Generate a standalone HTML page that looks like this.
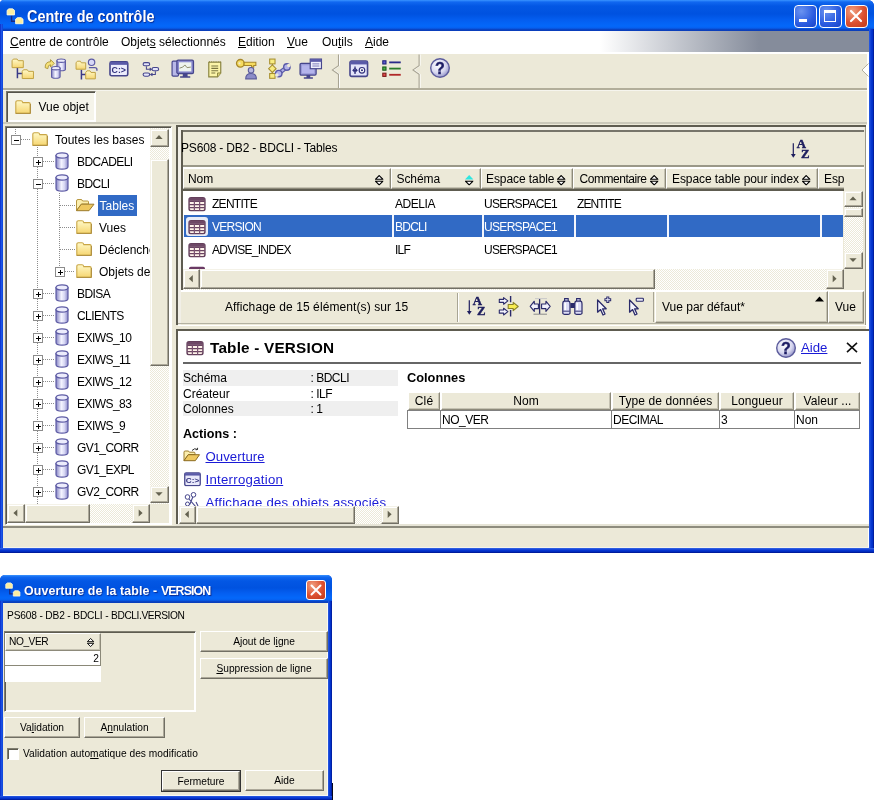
<!DOCTYPE html>
<html><head><meta charset="utf-8"><title>Centre de contrôle</title>
<style>
*{box-sizing:border-box;margin:0;padding:0}
html,body{width:875px;height:801px;background:#fff;overflow:hidden}
body{font:12px "Liberation Sans",sans-serif;color:#000;position:relative;will-change:transform}
.a{position:absolute}
.t{position:absolute;white-space:pre;line-height:14px;height:14px}
.d{font-size:10.2px}
u{text-decoration:underline;text-underline-offset:1px}
.beige{background:#ece9d8}
.sunk{border:1px solid;border-color:#848274 #fff #fff #848274;box-shadow:inset 1px 1px 0 #55534a}
.btn{position:absolute;background:#ece9d8;border:1px solid;border-color:#fff #716f64 #716f64 #fff;box-shadow:inset -1px -1px 0 #aca899;text-align:center;white-space:pre;font-size:10.2px}
.sb{position:absolute;background:#ece9d8;border:1px solid;border-color:#f4f2e8 #716f64 #716f64 #f4f2e8;box-shadow:inset -1px -1px 0 #aca899, inset 1px 1px 0 #fff}
.track{position:absolute;background:#f5f4ec conic-gradient(#fff 25%,#ece9d8 0 50%,#fff 0 75%,#ece9d8 0) 0 0/2px 2px}
.hc{position:absolute;background:#ece9d8;letter-spacing:-0.08px;border:1px solid;border-color:#fff #8d8a7a #8d8a7a #fff;box-shadow:inset -1px -1px 0 #c5c2b2;white-space:pre;line-height:21px;padding-left:5px;height:21px;top:168px;overflow:hidden}
.sel{background:#316ac5;color:#fff}
.lnk{color:#1a1ad6;text-decoration:underline;font-size:13.2px}
.vdot{position:absolute;width:1px;background:repeating-linear-gradient(#8c8c8c 0 1px,transparent 1px 2px)}
.hdot{position:absolute;height:1px;background:repeating-linear-gradient(90deg,#8c8c8c 0 1px,transparent 1px 2px)}
.pm{position:absolute;width:10px;height:10px;background:#fff;border:1px solid #8c8c8c}
.pm i{position:absolute;left:2px;top:3.5px;width:5px;height:1.3px;background:#000}
.pm b{position:absolute;left:3.8px;top:1.6px;width:1.3px;height:5px;background:#000}
svg{position:absolute;overflow:visible}
</style></head><body>

<svg width="0" height="0" style="left:-10px;top:-10px"><defs>
<linearGradient id="gF" x1="0" y1="0" x2="0" y2="1"><stop offset="0" stop-color="#fff9c8"/><stop offset="1" stop-color="#f6d672"/></linearGradient>
<linearGradient id="gC" x1="0" y1="0" x2="1" y2="0"><stop offset="0" stop-color="#8583c4"/><stop offset=".45" stop-color="#f4f4ff"/><stop offset=".7" stop-color="#d8d8f4"/><stop offset="1" stop-color="#8a88c8"/></linearGradient>
<radialGradient id="gH" cx=".4" cy=".35" r=".7"><stop offset="0" stop-color="#fff"/><stop offset=".6" stop-color="#d8d8f0"/><stop offset="1" stop-color="#8c8cc4"/></radialGradient>
<linearGradient id="gW" x1="0" y1="0" x2="0" y2="1"><stop offset="0" stop-color="#e4e4fa"/><stop offset="1" stop-color="#9c9cd8"/></linearGradient>
<symbol id="folder" viewBox="0 0 16 14"><path d="M.8 13.2V2.4Q.8 .8 2.4 .8H6Q7.3 .8 7.8 2.6H13.8Q15.2 2.6 15.2 4V13.2Z" fill="url(#gF)" stroke="#c9a646" stroke-width="1.1"/><path d="M.8 13.4H15.4V4" fill="none" stroke="#a8883a" stroke-width=".9"/></symbol>
<symbol id="fopen" viewBox="0 0 20 14"><path d="M1.5 12.5V3Q1.5 1.5 3 1.5H6Q7.2 1.5 7.6 3H12.5Q13.5 3 13.5 4V6H6.5L1.5 12.5Z" fill="#fbeeae" stroke="#b89840" stroke-width="1"/><path d="M1.5 12.7L6.3 6.2H19L14 12.7Z" fill="#eec860" stroke="#9c7c2c" stroke-width="1"/></symbol>
<symbol id="cyl" viewBox="0 0 14 18"><path d="M1 3.5V14.5Q1 17.2 7 17.2Q13 17.2 13 14.5V3.5Z" fill="url(#gC)" stroke="#5d5ba4" stroke-width="1.2"/><ellipse cx="7" cy="3.5" rx="6" ry="2.6" fill="#ececfc" stroke="#5d5ba4" stroke-width="1.2"/></symbol>
<symbol id="tbl" viewBox="0 0 18 15"><rect x=".8" y=".8" width="16.4" height="13.4" rx="2" fill="#fff3ea" stroke="#64405c" stroke-width="1.5"/><rect x="1" y="1" width="16" height="3" fill="#6e4866"/><path d="M1 4.6H17M1 7.8H17M1 11H17" stroke="#6a4462" stroke-width="1.35" fill="none"/><path d="M6.3 4.5V14M11.7 4.5V14" stroke="#7a5472" stroke-width="1.3" fill="none"/></symbol>
<symbol id="srt" viewBox="0 0 8 10"><path d="M4 .5L7.6 4.1H.4Z" fill="#fff" stroke="#000" stroke-width="1.05" stroke-linejoin="miter"/><path d="M4 9.5L7.6 5.9H.4Z" fill="#fff" stroke="#000" stroke-width="1.05"/></symbol>
<symbol id="srtc" viewBox="0 0 8 10"><path d="M4 0L8 4.4H0Z" fill="#2ee6e0"/><path d="M4 9.5L7.6 5.9H.4Z" fill="#fff" stroke="#000" stroke-width="1.05"/></symbol>
<symbol id="help" viewBox="0 0 20 20"><circle cx="10" cy="10" r="9.3" fill="url(#gH)" stroke="#5c5c9c" stroke-width="1.4"/><text x="10" y="15.6" text-anchor="middle" font-family="Liberation Sans,sans-serif" font-weight="bold" font-size="16" fill="#1c1c64" stroke="#1c1c64" stroke-width=".4">?</text></symbol>
<symbol id="term" viewBox="0 0 18 15"><rect x=".8" y=".8" width="16.4" height="13.4" rx="1.5" fill="#e8e8fa" stroke="#46468c" stroke-width="1.4"/><rect x="1" y="1" width="16" height="2.6" fill="#5a5aa8"/><text x="9" y="12" text-anchor="middle" font-family="Liberation Sans,sans-serif" font-weight="bold" font-size="8.6" fill="#30307c">C:&gt;</text></symbol>
<symbol id="az" viewBox="0 0 20 20"><path d="M3.3 4.3V17" stroke="#1e1e5e" stroke-width="1.2" fill="none"/><path d="M.9 15L3.3 18.8L5.7 15Z" fill="#1e1e5e"/><text x="6.8" y="9.4" font-family="Liberation Serif,serif" font-weight="bold" font-size="12.8" fill="#1e1e5e" stroke="#1e1e5e" stroke-width=".45">A</text><text x="11" y="19" font-family="Liberation Serif,serif" font-weight="bold" font-size="12.8" fill="#1e1e5e" stroke="#1e1e5e" stroke-width=".45">Z</text></symbol>
</defs></svg>
<!-- main window frame -->
<div class="a" style="left:0px;top:0px;width:874px;height:553px;background:#0b3bd6;border-radius:4px 6px 0 0"></div>
<div class="a" style="left:0px;top:0px;width:874px;height:31px;border-radius:4px 6px 0 0;background:linear-gradient(#3a94ff 0,#1168f0 2px,#0357e4 6px,#0052e0 14px,#045ef0 20px,#0468fa 26px,#0660f0 28px,#0a44c4 29.5px,#0a3cb8 31px)"></div>
<div class="a" style="left:0px;top:24px;width:3px;height:529px;background:linear-gradient(90deg,#0a2bc8,#1c56e6 50%,#0d41d8)"></div>
<div class="a" style="left:869px;top:29px;width:5px;height:524px;background:linear-gradient(90deg,#2a5ce2,#0838d2 45%,#0030c8 70%,#00138c)"></div>
<div class="a" style="left:0px;top:548px;width:874px;height:5px;background:linear-gradient(#3a6ae6,#0a38d4 40%,#0030c8 65%,#00138c)"></div>
<div class="a beige" style="left:3px;top:31px;width:866px;height:517px;"></div>
<svg style="left:6px;top:7.6px" width="19.6" height="17" viewBox="0 0 18 16"><path d="M5 7V12.5H9" stroke="#1a2a80" stroke-width="1.3" fill="none"/><path d="M.8 6.5V2.2L2.5 .8H6L7.8 2.2V6.5Z" fill="#fbeea0" stroke="#fffbe0" stroke-width=".8"/><path d="M8.8 14.8V10.5L10.5 9.1H14L15.8 10.5V14.8Z" fill="#fbeea0" stroke="#fffbe0" stroke-width=".8"/></svg>
<div class="t " style="left:27px;top:8.4px;font:bold 15.6px 'Liberation Sans',sans-serif;color:#fff;line-height:18px;height:18px;text-shadow:1px 1px 1px #0a2a90;transform:scaleX(.925);transform-origin:0 0">Centre de contrôle</div>
<div class="a" style="left:793.5px;top:4.5px;width:23px;height:23px;background:radial-gradient(circle at 30% 25%,#6a93f0,#2a5be0 60%,#1a45c8);border:1.4px solid #fff;border-radius:4px"></div>
<div class="a" style="left:819px;top:4.5px;width:23px;height:23px;background:radial-gradient(circle at 30% 25%,#6a93f0,#2a5be0 60%,#1a45c8);border:1.4px solid #fff;border-radius:4px"></div>
<div class="a" style="left:844.5px;top:4.5px;width:23px;height:23px;background:radial-gradient(circle at 30% 25%,#f0a080,#dc5030 55%,#c03a18);border:1.4px solid #fff;border-radius:4px"></div>
<div class="a" style="left:799px;top:19px;width:8px;height:3px;background:#fff"></div>
<div class="a" style="left:824px;top:10px;width:12px;height:12px;border:1px solid #fff;border-top:3px solid #fff"></div>
<svg style="left:845px;top:5px" width="22" height="22"><path d="M6 6L16 16M16 6L6 16" stroke="#fff" stroke-width="2.2" stroke-linecap="round"/></svg>
<div class="a" style="left:3px;top:31px;width:866px;height:21px;background:linear-gradient(90deg,#fff 0,#fff 597px,#858c9b 756px,#858c9b)"></div>
<div class="a" style="left:3px;top:52px;width:866px;height:2px;background:#fff"></div>
<div class="t " style="left:10px;top:34.5px;"><u>C</u>entre de contrôle</div>
<div class="t " style="left:121px;top:34.5px;">Objet<u>s</u> sélectionnés</div>
<div class="t " style="left:238px;top:34.5px;"><u>E</u>dition</div>
<div class="t " style="left:287px;top:34.5px;"><u>V</u>ue</div>
<div class="t " style="left:322px;top:34.5px;">Ou<u>t</u>ils</div>
<div class="t " style="left:365px;top:34.5px;"><u>A</u>ide</div>
<div class="a" style="left:3px;top:88px;width:864px;height:1.6px;background:#b2ae9a"></div>
<div class="a" style="left:3px;top:89.6px;width:864px;height:1px;background:#f6f5ee"></div>
<div class="a" style="left:867px;top:54px;width:2px;height:71px;background:#fff"></div>
<div class="a" style="left:866px;top:125px;width:3px;height:401px;background:#fff"></div>
<div class="a" style="left:868px;top:526px;width:1px;height:22px;background:#fff"></div>
<svg style="left:11.229999999999999px;top:57.599999999999994px" width="23.540000000000003" height="21.400000000000002" viewBox="0 0 22 20"><path d="M6 9V19M6 14.5H11" stroke="#3a3a88" stroke-width="1.4" fill="none"/><path d="M1 9V2.5L2.2 1H5.7250000000000005L6.775 2.5H11.5V9Z" fill="url(#gF)" stroke="#c0a040" stroke-width=".9"/><path d="M10.5 19.2V12.5L11.7 11H15.225000000000001L16.275 12.5H21.0V19.2Z" fill="url(#gF)" stroke="#c0a040" stroke-width=".9"/></svg>
<svg style="left:43.23px;top:57.599999999999994px" width="23.540000000000003" height="21.400000000000002" viewBox="0 0 22 20"><path d="M2 9Q2 3.5 7 3.5V1.5L10.5 5L7 8.5V6.3Q4.5 6.3 4.5 10Z" fill="#f6e27a" stroke="#a89030" stroke-width=".8"/><path d="M13 2.5V10.5Q13 12 17.0 12Q21 12 21 10.5V2.5Z" fill="url(#gC)" stroke="#5d5ba4" stroke-width="1"/><ellipse cx="17.0" cy="2.5" rx="4.0" ry="1.6" fill="#ececfc" stroke="#5d5ba4" stroke-width="1"/><path d="M8 9.5V17.5Q8 19 12.0 19Q16 19 16 17.5V9.5Z" fill="url(#gC)" stroke="#5d5ba4" stroke-width="1"/><ellipse cx="12.0" cy="9.5" rx="4.0" ry="1.6" fill="#ececfc" stroke="#5d5ba4" stroke-width="1"/></svg>
<svg style="left:75.23px;top:57.599999999999994px" width="23.540000000000003" height="21.400000000000002" viewBox="0 0 22 20"><path d="M6 11V20M6 15.5H10" stroke="#3a3a88" stroke-width="1.4" fill="none"/><path d="M1 10.5V4.5L2.2 3H5.05L5.95 4.5H10V10.5Z" fill="url(#gF)" stroke="#c0a040" stroke-width=".9"/><path d="M10 19.5V13.5L11.2 12H14.05L14.95 13.5H19V19.5Z" fill="url(#gF)" stroke="#c0a040" stroke-width=".9"/><circle cx="15.5" cy="4" r="3" fill="#d8d8f6" stroke="#5d5ba4" stroke-width="1.1"/><path d="M13 9H18.5Q20.5 9 20.5 11V12" stroke="#5d5ba4" stroke-width="1.3" fill="none"/></svg>
<svg style="left:107.23px;top:57.599999999999994px" width="23.540000000000003" height="21.400000000000002" viewBox="0 0 22 20"><rect x="2.8" y="3.6" width="16.6" height="13" rx="1.5" fill="#ececfc" stroke="#46468c" stroke-width="1.5"/><rect x="3" y="3.8" width="16.2" height="2.6" fill="#5a5aa8"/><text x="11" y="14.3" text-anchor="middle" font-family="Liberation Sans,sans-serif" font-weight="bold" font-size="8.2" fill="#30307c">C:&gt;</text></svg>
<svg style="left:139.23px;top:57.599999999999994px" width="23.540000000000003" height="21.400000000000002" viewBox="0 0 22 20"><g transform="translate(1.2 2.2) scale(.88 .84)"><rect x="3" y="2.5" width="7" height="3.6" rx="1.8" fill="#e4e4fa" stroke="#46468c" stroke-width="1.2"/><rect x="12.5" y="8" width="7" height="3.6" rx="1.8" fill="#e4e4fa" stroke="#46468c" stroke-width="1.2"/><rect x="3" y="14" width="7" height="3.6" rx="1.8" fill="#e4e4fa" stroke="#46468c" stroke-width="1.2"/><path d="M6.5 6.5V9.8H11.5M10 8.3L11.8 9.8L10 11.3M16 12V15.8H11.5M13 14.3L11 15.8L13 17.3" stroke="#46468c" stroke-width="1.1" fill="none"/></g></svg>
<svg style="left:171.23px;top:57.599999999999994px" width="23.540000000000003" height="21.400000000000002" viewBox="0 0 22 20"><rect x="1" y="3" width="6" height="14" rx="1" fill="#b8b8e8" stroke="#46468c" stroke-width="1.1"/><rect x="5.5" y="2" width="15.5" height="12.5" rx="1.2" fill="#8c8cd0" stroke="#46468c" stroke-width="1.2"/><rect x="7.5" y="4" width="11.5" height="8.5" fill="#eef4ee"/><path d="M8 9.5L11 8.5L13 6.5L15 9L18.5 8.5" stroke="#8a8a6a" stroke-width=".9" fill="none"/><path d="M11 14.5V17H8.5V18.5H18V17H15.5V14.5Z" fill="#46468c"/></svg>
<svg style="left:203.23px;top:57.599999999999994px" width="23.540000000000003" height="21.400000000000002" viewBox="0 0 22 20"><path d="M5.4 4H16.6V14L13.6 17.6H5.4Z" fill="#fbf4a8" stroke="#8a8440" stroke-width="1.1"/><path d="M6.2 4V2.9M8.2 4V2.9M10.2 4V2.9M12.2 4V2.9M14.2 4V2.9M16 4V2.9" stroke="#8a8440" stroke-width=".9"/><path d="M7.8 7.5H14.2M7.8 9.7H14.2M7.8 11.9H14.2M7.8 14H11.5" stroke="#7a7440" stroke-width="1"/><path d="M13.6 17.6V14H16.6" fill="#e0d478" stroke="#8a8440" stroke-width=".9"/></svg>
<svg style="left:235.23px;top:57.599999999999994px" width="23.540000000000003" height="21.400000000000002" viewBox="0 0 22 20"><circle cx="5" cy="5" r="3.6" fill="#f6dc60" stroke="#a8882a" stroke-width="1.2"/><circle cx="4.2" cy="5" r="1" fill="#ece9d8"/><path d="M8.5 4H19.5V7H17.5V8.5H15.5V7H8.5Z" fill="#f6dc60" stroke="#a8882a" stroke-width="1"/><circle cx="15" cy="11.5" r="2.6" fill="#b8b8e0" stroke="#5a5a9a" stroke-width="1"/><path d="M10 19.5Q10 14.5 15 14.5Q20 14.5 20 19.5Z" fill="#8c8cc8" stroke="#5a5a9a" stroke-width="1"/></svg>
<svg style="left:267.23px;top:57.599999999999994px" width="23.540000000000003" height="21.400000000000002" viewBox="0 0 22 20"><path d="M5 4.5V16" stroke="#8a7a30" stroke-width="1"/><rect x="2.5" y="1" width="5" height="4.5" fill="#f8ec80" stroke="#a89030" stroke-width="1"/><path d="M5 6.5L8.5 10L5 13.5L1.5 10Z" fill="#f8ec80" stroke="#a89030" stroke-width="1"/><rect x="2.5" y="14.5" width="5" height="4.5" fill="#f8ec80" stroke="#a89030" stroke-width="1"/><path d="M11.5 14L18 9" stroke="#5a5aa8" stroke-width="4" stroke-linecap="round"/><path d="M11.5 14L18 9" stroke="#b4b4e8" stroke-width="1.8" stroke-linecap="round"/><circle cx="18.6" cy="8.4" r="3" fill="#b4b4e8" stroke="#5a5aa8" stroke-width="1.3"/><circle cx="20.4" cy="7" r="1.7" fill="#ece9d8"/><circle cx="11" cy="14.6" r="3" fill="#b4b4e8" stroke="#5a5aa8" stroke-width="1.3"/><circle cx="9.2" cy="16" r="1.7" fill="#ece9d8"/></svg>
<svg style="left:299.23px;top:57.599999999999994px" width="23.540000000000003" height="21.400000000000002" viewBox="0 0 22 20"><rect x="1" y="5" width="15" height="11" rx="1.2" fill="#9a9ad8" stroke="#46468c" stroke-width="1.2"/><rect x="2.8" y="6.8" width="11.4" height="7.4" fill="#b4b4ec"/><path d="M7 16V18H4.5V19.5H13V18H10.5V16Z" fill="#46468c"/><rect x="10.5" y="1" width="10.5" height="9" fill="#eeeefc" stroke="#46468c" stroke-width="1.1"/><rect x="10.5" y="1" width="10.5" height="2.6" fill="#5a5aa8"/><path d="M12.5 5.5H19M12.5 7.5H19" stroke="#7a7ab8" stroke-width=".9"/></svg>
<svg style="left:0;top:0" width="1" height="1"><path d="M338.5 54.5V65.6L332.4 69.9L338.5 74.2V88" fill="none" stroke="#fff" stroke-width="1" transform="translate(1 0)"/><path d="M338.5 54.5V65.6L332.4 69.9L338.5 74.2V88" fill="none" stroke="#a8a493" stroke-width="1.1"/></svg>
<svg style="left:347.23px;top:57.599999999999994px" width="23.540000000000003" height="21.400000000000002" viewBox="0 0 22 20"><rect x="2.8" y="2.8" width="16.4" height="14.4" rx="1.5" fill="#e4e4fa" stroke="#46468c" stroke-width="1.5"/><rect x="3" y="3" width="16" height="3" fill="#5a5aa8"/><path d="M7.5 8V15M5.2 11.5H9.8" stroke="#30307c" stroke-width="1.2"/><circle cx="7.5" cy="11.5" r="1.6" fill="none" stroke="#30307c" stroke-width=".9"/><circle cx="14" cy="11.5" r="2.6" fill="#fff" stroke="#30307c" stroke-width="1.1"/><circle cx="14" cy="11.5" r="1" fill="#30307c"/></svg>
<svg style="left:379.73px;top:57.599999999999994px" width="23.540000000000003" height="21.400000000000002" viewBox="0 0 22 20"><rect x="2.6" y="2.6" width="3" height="3" fill="#5a5ad0" stroke="#22227a" stroke-width="1"/><rect x="2.6" y="8.4" width="3" height="3" fill="#4ab04a" stroke="#1a5a1a" stroke-width="1"/><rect x="2.6" y="14.2" width="3" height="3" fill="#e04a4a" stroke="#7a1a1a" stroke-width="1"/><path d="M8.6 4.1H19.4" stroke="#2a2a8a" stroke-width="1.7"/><path d="M8.6 9.9H19.4" stroke="#2a7a2a" stroke-width="1.7"/><path d="M8.6 15.7H19.4" stroke="#b02828" stroke-width="1.7"/></svg>
<svg style="left:0;top:0" width="1" height="1"><path d="M419.1 54.5V65.6L413.0 69.9L419.1 74.2V88" fill="none" stroke="#fff" stroke-width="1" transform="translate(1 0)"/><path d="M419.1 54.5V65.6L413.0 69.9L419.1 74.2V88" fill="none" stroke="#a8a493" stroke-width="1.1"/></svg>
<svg style="left:430px;top:58px" width="20" height="20"><use href="#help" width="20" height="20"/></svg>
<svg style="left:861px;top:63px" width="8" height="14"><path d="M7.5 .5L1 7L7.5 13.5" fill="#fff" stroke="#b4b09d" stroke-width="1"/></svg>
<div class="a" style="left:6px;top:91px;width:90px;height:32px;background:#f5f4ea;border:1px solid;border-color:#7b796c #fff #fff #7b796c;box-shadow:inset 1px 1px 0 #55534a,inset -1px -2px 0 #fff"></div>
<svg style="left:15px;top:100px" width="16" height="14"><use href="#folder" width="16" height="14"/></svg>
<div class="t " style="left:38.5px;top:100px;">Vue objet</div>
<div class="a" style="left:3px;top:122px;width:864px;height:2px;background:#cbc9ba"></div>
<div class="a sunk" style="left:5px;top:126px;width:167px;height:399px;background:#fff"></div>
<div class="a" style="left:7px;top:128px;width:143px;height:376px;overflow:hidden">
<div class="vdot" style="left:8px;top:-1px;width:1px;height:8px;"></div>
<div class="vdot" style="left:30px;top:19px;width:1px;height:360px;"></div>
<div class="vdot" style="left:52px;top:65px;width:1px;height:79px;"></div>
<div class="hdot" style="left:14px;top:11px;width:10px;height:1px;"></div>
<div class="pm" style="left:4px;top:7px"><i></i></div>
<svg style="left:25px;top:4px" width="16" height="14"><use href="#folder" width="16" height="14"/></svg>
<div class="t " style="left:48px;top:5px;">Toutes les bases</div>
<div class="hdot" style="left:36px;top:33px;width:11px;height:1px;"></div>
<div class="pm" style="left:26px;top:29px"><i></i><b></b></div>
<svg style="left:48px;top:24px" width="14" height="18"><use href="#cyl" width="14" height="18"/></svg>
<div class="t " style="left:70px;top:27px;letter-spacing:-0.55px">BDCADELI</div>
<div class="hdot" style="left:36px;top:55px;width:11px;height:1px;"></div>
<div class="pm" style="left:26px;top:51px"><i></i></div>
<svg style="left:48px;top:46px" width="14" height="18"><use href="#cyl" width="14" height="18"/></svg>
<div class="t " style="left:70px;top:49px;letter-spacing:-0.55px">BDCLI</div>
<div class="hdot" style="left:53px;top:77px;width:15px;height:1px;"></div>
<svg style="left:68px;top:70px" width="20" height="14"><use href="#fopen" width="20" height="14"/></svg>
<div class="a sel" style="left:91.4px;top:66.69999999999999px;width:38.6px;height:21.6px;"></div>
<div class="t " style="left:92.6px;top:71px;color:#fff">Tables</div>
<div class="hdot" style="left:53px;top:99px;width:15px;height:1px;"></div>
<svg style="left:69px;top:92px" width="16" height="14"><use href="#folder" width="16" height="14"/></svg>
<div class="t " style="left:92px;top:93px;">Vues</div>
<div class="hdot" style="left:53px;top:121px;width:15px;height:1px;"></div>
<svg style="left:69px;top:114px" width="16" height="14"><use href="#folder" width="16" height="14"/></svg>
<div class="t " style="left:92px;top:115px;">Déclencheurs</div>
<div class="hdot" style="left:58px;top:143px;width:10px;height:1px;"></div>
<div class="pm" style="left:48px;top:139px"><i></i><b></b></div>
<svg style="left:69px;top:136px" width="16" height="14"><use href="#folder" width="16" height="14"/></svg>
<div class="t " style="left:92px;top:137px;">Objets de</div>
<div class="hdot" style="left:36px;top:165px;width:11px;height:1px;"></div>
<div class="pm" style="left:26px;top:161px"><i></i><b></b></div>
<svg style="left:48px;top:156px" width="14" height="18"><use href="#cyl" width="14" height="18"/></svg>
<div class="t " style="left:70px;top:159px;letter-spacing:-0.55px">BDISA</div>
<div class="hdot" style="left:36px;top:187px;width:11px;height:1px;"></div>
<div class="pm" style="left:26px;top:183px"><i></i><b></b></div>
<svg style="left:48px;top:178px" width="14" height="18"><use href="#cyl" width="14" height="18"/></svg>
<div class="t " style="left:70px;top:181px;letter-spacing:-0.55px">CLIENTS</div>
<div class="hdot" style="left:36px;top:209px;width:11px;height:1px;"></div>
<div class="pm" style="left:26px;top:205px"><i></i><b></b></div>
<svg style="left:48px;top:200px" width="14" height="18"><use href="#cyl" width="14" height="18"/></svg>
<div class="t " style="left:70px;top:203px;letter-spacing:-0.55px">EXIWS_10</div>
<div class="hdot" style="left:36px;top:231px;width:11px;height:1px;"></div>
<div class="pm" style="left:26px;top:227px"><i></i><b></b></div>
<svg style="left:48px;top:222px" width="14" height="18"><use href="#cyl" width="14" height="18"/></svg>
<div class="t " style="left:70px;top:225px;letter-spacing:-0.55px">EXIWS_11</div>
<div class="hdot" style="left:36px;top:253px;width:11px;height:1px;"></div>
<div class="pm" style="left:26px;top:249px"><i></i><b></b></div>
<svg style="left:48px;top:244px" width="14" height="18"><use href="#cyl" width="14" height="18"/></svg>
<div class="t " style="left:70px;top:247px;letter-spacing:-0.55px">EXIWS_12</div>
<div class="hdot" style="left:36px;top:275px;width:11px;height:1px;"></div>
<div class="pm" style="left:26px;top:271px"><i></i><b></b></div>
<svg style="left:48px;top:266px" width="14" height="18"><use href="#cyl" width="14" height="18"/></svg>
<div class="t " style="left:70px;top:269px;letter-spacing:-0.55px">EXIWS_83</div>
<div class="hdot" style="left:36px;top:297px;width:11px;height:1px;"></div>
<div class="pm" style="left:26px;top:293px"><i></i><b></b></div>
<svg style="left:48px;top:288px" width="14" height="18"><use href="#cyl" width="14" height="18"/></svg>
<div class="t " style="left:70px;top:291px;letter-spacing:-0.55px">EXIWS_9</div>
<div class="hdot" style="left:36px;top:319px;width:11px;height:1px;"></div>
<div class="pm" style="left:26px;top:315px"><i></i><b></b></div>
<svg style="left:48px;top:310px" width="14" height="18"><use href="#cyl" width="14" height="18"/></svg>
<div class="t " style="left:70px;top:313px;letter-spacing:-0.55px">GV1_CORR</div>
<div class="hdot" style="left:36px;top:341px;width:11px;height:1px;"></div>
<div class="pm" style="left:26px;top:337px"><i></i><b></b></div>
<svg style="left:48px;top:332px" width="14" height="18"><use href="#cyl" width="14" height="18"/></svg>
<div class="t " style="left:70px;top:335px;letter-spacing:-0.55px">GV1_EXPL</div>
<div class="hdot" style="left:36px;top:363px;width:11px;height:1px;"></div>
<div class="pm" style="left:26px;top:359px"><i></i><b></b></div>
<svg style="left:48px;top:354px" width="14" height="18"><use href="#cyl" width="14" height="18"/></svg>
<div class="t " style="left:70px;top:357px;letter-spacing:-0.55px">GV2_CORR</div>
</div>
<div class="track" style="left:150px;top:128px;width:19px;height:376px;"></div>
<div class="sb" style="left:150px;top:128.6px;width:19px;height:18px;"></div>
<svg style="left:0;top:0" width="1" height="1"><polygon points="155.4,138.9 162.6,138.9 159.0,134.99999999999997" fill="#646250"/></svg>
<div class="sb" style="left:150px;top:158.6px;width:19px;height:207px;"></div>
<div class="sb" style="left:150px;top:486px;width:19px;height:17px;"></div>
<svg style="left:0;top:0" width="1" height="1"><polygon points="155.4,492.2 162.6,492.2 159.0,496.1" fill="#646250"/></svg>
<div class="track" style="left:7px;top:504px;width:143px;height:19px;"></div>
<div class="sb" style="left:7px;top:504px;width:18px;height:19px;"></div>
<svg style="left:0;top:0" width="1" height="1"><polygon points="17.3,509.4 17.3,516.6 13.399999999999999,513.0" fill="#646250"/></svg>
<div class="sb" style="left:25px;top:504px;width:65px;height:19px;"></div>
<div class="sb" style="left:132px;top:504px;width:18px;height:19px;"></div>
<svg style="left:0;top:0" width="1" height="1"><polygon points="138.7,509.4 138.7,516.6 142.60000000000002,513.0" fill="#646250"/></svg>
<div class="a beige" style="left:150px;top:504px;width:19px;height:19px;"></div>
<div class="a" style="left:176px;top:125px;width:690px;height:2px;background:#5e5c50"></div>
<div class="a" style="left:175.7px;top:125px;width:2px;height:200px;background:#5e5c50"></div>
<div class="a" style="left:178px;top:325px;width:690px;height:1px;background:#fff"></div>
<div class="a" style="left:864.5px;top:127px;width:1.5px;height:198px;background:#9a9888"></div>
<div class="a" style="left:178px;top:127px;width:686px;height:3px;background:#f1efe7"></div>
<div class="a" style="left:178px;top:127px;width:3px;height:198px;background:#f1efe7"></div>
<div class="a" style="left:181px;top:130px;width:683px;height:2px;background:#77756a"></div>
<div class="a" style="left:181px;top:130px;width:2px;height:160px;background:#5e5c50"></div>
<div class="t " style="left:181px;top:141px;letter-spacing:-0.17px">PS608 - DB2 - BDCLI - Tables</div>
<svg style="left:790px;top:139px" width="20" height="20"><use href="#az" width="20" height="20"/></svg>
<div class="a" style="left:183px;top:165px;width:681px;height:2px;background:#9a9888"></div>
<div class="a" style="left:183px;top:167px;width:681px;height:2px;background:#fff"></div>
<div class="hc" style="left:183px;width:208px;top:168px;padding-left:4px">Nom</div>
<svg style="left:375px;top:174.5px" width="8.4" height="10.5"><use href="#srt" width="8.4" height="10.5"/></svg>
<div class="hc" style="left:391px;width:90px;top:168px;padding-left:4.5px">Schéma</div>
<svg style="left:465px;top:174.5px" width="8.4" height="10.5"><use href="#srtc" width="8.4" height="10.5"/></svg>
<div class="hc" style="left:481px;width:92px;top:168px;padding-left:4px">Espace table</div>
<svg style="left:557px;top:174.5px" width="8.4" height="10.5"><use href="#srt" width="8.4" height="10.5"/></svg>
<div class="hc" style="left:573px;width:93px;top:168px;padding-left:5.5px"><span style="letter-spacing:-0.45px">Commentaire</span></div>
<svg style="left:650px;top:174.5px" width="8.4" height="10.5"><use href="#srt" width="8.4" height="10.5"/></svg>
<div class="hc" style="left:666px;width:152px;top:168px;padding-left:5px">Espace table pour index</div>
<svg style="left:802px;top:174.5px" width="8.4" height="10.5"><use href="#srt" width="8.4" height="10.5"/></svg>
<div class="hc" style="left:818px;width:26px;top:168px;border-right:0;box-shadow:inset 0 -1px 0 #c5c2b2;padding-left:5px">Esp</div>
<div class="a" style="left:183px;top:189px;width:661px;height:2px;background:#5e5c50"></div>
<div class="a" style="left:183px;top:191px;width:660px;height:78px;background:#fff"></div>
<div class="a sel" style="left:184px;top:215.4px;width:659px;height:22px;"></div>
<div class="a" style="left:392.3px;top:215.4px;width:1.5px;height:22px;background:#f4f6fc"></div>
<div class="a" style="left:482.3px;top:215.4px;width:1.5px;height:22px;background:#f4f6fc"></div>
<div class="a" style="left:574.3px;top:215.4px;width:1.5px;height:22px;background:#f4f6fc"></div>
<div class="a" style="left:667.3px;top:215.4px;width:1.5px;height:22px;background:#f4f6fc"></div>
<div class="a" style="left:820.3px;top:215.4px;width:1.5px;height:22px;background:#f4f6fc"></div>
<div class="a" style="left:186px;top:217px;width:22px;height:19px;background:#e8ecf6;border-radius:3px"></div>
<svg style="left:188px;top:197px" width="18" height="14.5"><use href="#tbl" width="18" height="14.5"/></svg>
<div class="t " style="left:212px;top:197px;letter-spacing:-0.72px">ZENTITE</div>
<div class="t " style="left:395px;top:197px;letter-spacing:-0.45px">ADELIA</div>
<div class="t " style="left:484px;top:197px;letter-spacing:-0.68px">USERSPACE1</div>
<div class="t " style="left:577px;top:197px;letter-spacing:-0.88px">ZENTITE</div>
<svg style="left:188px;top:220px" width="18" height="14.5"><use href="#tbl" width="18" height="14.5"/></svg>
<div class="t " style="left:212px;top:220px;color:#fff;letter-spacing:-0.72px">VERSION</div>
<div class="t " style="left:395px;top:220px;color:#fff;letter-spacing:-0.75px">BDCLI</div>
<div class="t " style="left:484px;top:220px;color:#fff;letter-spacing:-0.68px">USERSPACE1</div>
<div class="t " style="left:577px;top:220px;color:#fff;letter-spacing:-0.88px"></div>
<svg style="left:188px;top:243px" width="18" height="14.5"><use href="#tbl" width="18" height="14.5"/></svg>
<div class="t " style="left:212px;top:243px;letter-spacing:-0.72px">ADVISE_INDEX</div>
<div class="t " style="left:395px;top:243px;letter-spacing:-0.75px">ILF</div>
<div class="t " style="left:484px;top:243px;letter-spacing:-0.68px">USERSPACE1</div>
<div class="t " style="left:577px;top:243px;letter-spacing:-0.88px"></div>
<svg style="left:188px;top:266px" width="18" height="3"><path d="M1 3V2.4Q1 .7 2.8 .7H15.2Q17 .7 17 2.4V3Z" fill="#6a3a64"/></svg>
<div class="track" style="left:844px;top:191px;width:19px;height:78px;"></div>
<div class="sb" style="left:844px;top:191px;width:19px;height:16px;"></div>
<svg style="left:0;top:0" width="1" height="1"><polygon points="849.4,200.3 856.6,200.3 853.0,196.39999999999998" fill="#646250"/></svg>
<div class="sb" style="left:844px;top:208px;width:19px;height:9px;"></div>
<div class="sb" style="left:844px;top:252px;width:19px;height:17px;"></div>
<svg style="left:0;top:0" width="1" height="1"><polygon points="849.4,258.2 856.6,258.2 853.0,262.1" fill="#646250"/></svg>
<div class="track" style="left:183px;top:269px;width:643px;height:20.5px;"></div>
<div class="sb" style="left:183px;top:269px;width:17px;height:20.3px;"></div>
<svg style="left:0;top:0" width="1" height="1"><polygon points="192.8,275.04999999999995 192.8,282.25 188.89999999999998,278.65" fill="#646250"/></svg>
<div class="sb" style="left:200px;top:269px;width:455px;height:20.3px;"></div>
<div class="sb" style="left:826px;top:269px;width:18px;height:20.3px;"></div>
<svg style="left:0;top:0" width="1" height="1"><polygon points="832.7,275.04999999999995 832.7,282.25 836.5999999999999,278.65" fill="#646250"/></svg>
<div class="a beige" style="left:844px;top:269px;width:20px;height:20.5px;"></div>
<div class="a" style="left:181px;top:289.5px;width:683px;height:2.5px;background:#fff"></div>
<div class="a" style="left:178px;top:323px;width:686px;height:1px;background:#b4b2a2"></div>
<div class="t " style="left:225px;top:300px;letter-spacing:0.1px">Affichage de 15 élément(s) sur 15</div>
<div class="a" style="left:457px;top:293px;width:1px;height:29px;background:#a8a594"></div>
<div class="a" style="left:458px;top:293px;width:1px;height:29px;background:#fff"></div>
<svg style="left:466px;top:296px" width="20" height="20"><use href="#az" width="20" height="20"/></svg>
<svg style="left:455px;top:290px" width="100" height="35" viewBox="455 290 100 35"><path d="M510.6 296V302.3M510.6 310V316.6" stroke="#2a2a6a" stroke-width="1.4"/><path d="M499.3 299.382H503.6V297.6L507.90000000000003 300.90000000000003L503.6 304.20000000000005V302.41800000000006H499.3Z" fill="#f2f2fc" stroke="#2a2a6a" stroke-width="1.1" stroke-linejoin="round"/><path d="M499.3 310.036H503.6V308.2L507.90000000000003 311.59999999999997L503.6 315.0V313.164H499.3Z" fill="#f2f2fc" stroke="#2a2a6a" stroke-width="1.1" stroke-linejoin="round"/><path d="M508.2 304.568H513.2V302.3L518.2 306.5L513.2 310.7V308.432H508.2Z" fill="#f8ec50" stroke="#8a8228" stroke-width="1.1" stroke-linejoin="round"/><path d="M539.6 299V314" stroke="#2a2a6a" stroke-width="1.3"/><path d="M535 298.6H547" stroke="#c8c8c8" stroke-width="1"/><path d="M533.5 314.2H547" stroke="#8a8a8a" stroke-width="1"/><path d="M538.4000000000001 303.954H534.3000000000001V301.2L530.2 306.3L534.3000000000001 311.4V308.64599999999996H538.4000000000001Z" fill="#f2f2fc" stroke="#2a2a6a" stroke-width="1.1" stroke-linejoin="round"/><path d="M541.6 303.954H545.9000000000001V301.2L550.2 306.3L545.9000000000001 311.4V308.64599999999996H541.6Z" fill="#f2f2fc" stroke="#2a2a6a" stroke-width="1.1" stroke-linejoin="round"/></svg>
<svg style="left:555px;top:290px" width="100" height="35" viewBox="555 290 100 35"><rect x="570.4" y="303" width="4.6" height="5" fill="#2a2a6a"/><path d="M564.6 301.2V298.6H568.2V301.2" fill="#d8d8f4" stroke="#2a2a6a" stroke-width="1.1"/><path d="M562.8000000000001 304Q562.8000000000001 301.2 564.4000000000001 301.2H568.4000000000001Q570.0 301.2 570.0 304V313.2Q570.0 314.4 566.4000000000001 314.4Q562.8000000000001 314.4 562.8000000000001 313.2Z" fill="#dcdcf6" stroke="#2a2a6a" stroke-width="1.2"/><path d="M565.2 303V310" stroke="#fff" stroke-width="1.6"/><path d="M563.2 311.2H569.6" stroke="#2a2a6a" stroke-width=".9"/><path d="M576.6 301.2V298.6H580.2V301.2" fill="#d8d8f4" stroke="#2a2a6a" stroke-width="1.1"/><path d="M574.8000000000001 304Q574.8000000000001 301.2 576.4000000000001 301.2H580.4000000000001Q582.0 301.2 582.0 304V313.2Q582.0 314.4 578.4000000000001 314.4Q574.8000000000001 314.4 574.8000000000001 313.2Z" fill="#dcdcf6" stroke="#2a2a6a" stroke-width="1.2"/><path d="M577.2 303V310" stroke="#fff" stroke-width="1.6"/><path d="M575.2 311.2H581.6" stroke="#2a2a6a" stroke-width=".9"/><path d="M597.6 300V312.2L600.6 309.6L603.0 315L605.0 314L602.6 308.8H606.2Z" fill="#f4f4fc" stroke="#2a2a6a" stroke-width="1.3" stroke-linejoin="round"/><path d="M607.8 296.4V303M604.4 299.7H611.2" stroke="#2a2a6a" stroke-width="3"/><path d="M607.8 297.4V302M605.4 299.7H610.2" stroke="#e8e8fa" stroke-width="1"/><path d="M629.6 300V312.2L632.6 309.6L635.0 315L637.0 314L634.6 308.8H638.2Z" fill="#f4f4fc" stroke="#2a2a6a" stroke-width="1.3" stroke-linejoin="round"/><rect x="636.2" y="298.2" width="7.2" height="3" rx=".8" fill="#e8e8fa" stroke="#2a2a6a" stroke-width="1.1"/></svg>
<div class="a" style="left:653px;top:292px;width:1px;height:30px;background:#a8a594"></div>
<div class="a" style="left:655px;top:291px;width:173px;height:32px;border:1px solid;border-color:#fff #8d8a7a #8d8a7a #fff;box-shadow:inset -1px -1px 0 #c5c2b2"></div>
<div class="t " style="left:662px;top:300px;">Vue par défaut*</div>
<svg style="left:815px;top:296px" width="9" height="6"><path d="M0 5.5H9L4.5 .5Z" fill="#000"/></svg>
<div class="a" style="left:828px;top:291px;width:36px;height:32px;border:1px solid;border-color:#fff #8d8a7a #8d8a7a #fff;box-shadow:inset -1px -1px 0 #c5c2b2"></div>
<div class="t " style="left:835px;top:300px;">Vue</div>
<div class="a" style="left:176px;top:329px;width:693px;height:197px;background:#fff"></div>
<div class="a" style="left:176px;top:329px;width:693px;height:2px;background:#5e5c50"></div>
<div class="a" style="left:175.7px;top:329px;width:2px;height:195.3px;background:#5e5c50"></div>
<div class="a" style="left:175.7px;top:524.3px;width:693.3px;height:1.7px;background:#e6e4d6"></div>
<svg style="left:185.5px;top:341px" width="18" height="14.5"><use href="#tbl" width="18" height="14.5"/></svg>
<div class="t " style="left:210px;top:339px;font:bold 15.3px 'Liberation Sans',sans-serif;line-height:18px;height:18px;letter-spacing:0.2px">Table - VERSION</div>
<svg style="left:775.5px;top:338px" width="20" height="20"><use href="#help" width="20" height="20"/></svg>
<div class="t lnk" style="left:801px;top:340px;line-height:15px">Aide</div>
<svg style="left:846px;top:342px" width="12" height="11"><path d="M1 .8L11 10.2M11 .8L1 10.2" stroke="#111" stroke-width="1.6"/></svg>
<div class="a" style="left:183px;top:362px;width:678px;height:2px;background:#666"></div>
<div class="a" style="left:183px;top:370px;width:215px;height:16px;background:#efefef"></div>
<div class="a" style="left:183px;top:401px;width:215px;height:15px;background:#efefef"></div>
<div class="t " style="left:183px;top:371px;">Schéma</div>
<div class="t " style="left:310.5px;top:371px;letter-spacing:-0.5px">: BDCLI</div>
<div class="t " style="left:183px;top:387px;">Créateur</div>
<div class="t " style="left:310.5px;top:387px;letter-spacing:-0.5px">: ILF</div>
<div class="t " style="left:183px;top:402px;">Colonnes</div>
<div class="t " style="left:310.5px;top:402px;letter-spacing:-0.5px">: 1</div>
<div class="t " style="left:183px;top:427px;font-weight:bold;font-size:12.6px">Actions :</div>
<svg style="left:183px;top:447px" width="18" height="15" viewBox="0 0 18 15"><path d="M1 13.5V5.2Q1 4 2.2 4H5Q6 4 6.4 5.2H11Q12 5.2 12 6.2V7.5H5.5L1 13.5Z" fill="#fbeeae" stroke="#9c7c2c" stroke-width="1"/><path d="M1 13.7L5.2 7.7H16.5L12.3 13.7Z" fill="#eec860" stroke="#8c6c20" stroke-width="1"/><path d="M9 3.5Q11.5 .5 14.5 2.5M14.5 2.5L12.8 2.8M14.5 2.5L14.6 .8" stroke="#333" stroke-width="1" fill="none"/></svg>
<div class="t lnk" style="left:205.5px;top:449px;line-height:15px;letter-spacing:0.05px">Ouverture</div>
<svg style="left:184px;top:472px" width="17" height="14.5"><use href="#term" width="17" height="14.5"/></svg>
<div class="t lnk" style="left:205.5px;top:472px;line-height:15px;letter-spacing:0.28px">Interrogation</div>
<div class="a" style="left:179px;top:490px;width:220px;height:16px;overflow:hidden">
<svg style="left:5px;top:2px" width="16" height="16" viewBox="0 0 16 16"><circle cx="3.5" cy="5" r="2.3" fill="#fff" stroke="#46468c" stroke-width="1"/><circle cx="9.5" cy="2.8" r="2.3" fill="#fff" stroke="#46468c" stroke-width="1"/><path d="M5 7L12 15M8.8 5L6 12M6 12L3 14M12 10L14 14" stroke="#46468c" stroke-width="1.1" fill="none"/><circle cx="3.5" cy="12" r="2" fill="#fff" stroke="#46468c" stroke-width="1"/></svg>
<div class="t lnk" style="left:26.5px;top:5px;line-height:15px;letter-spacing:0.25px">Affichage des objets associés</div>
</div>
<div class="track" style="left:179px;top:506px;width:220px;height:17.6px;"></div>
<div class="sb" style="left:179px;top:506px;width:17px;height:17.6px;"></div>
<svg style="left:0;top:0" width="1" height="1"><polygon points="188.8,510.69999999999993 188.8,517.9 184.89999999999998,514.3" fill="#646250"/></svg>
<div class="sb" style="left:196px;top:506px;width:159px;height:17.6px;"></div>
<div class="sb" style="left:381px;top:506px;width:18px;height:17.6px;"></div>
<svg style="left:0;top:0" width="1" height="1"><polygon points="387.7,510.69999999999993 387.7,517.9 391.6,514.3" fill="#646250"/></svg>
<div class="t " style="left:407px;top:371px;font-weight:bold;font-size:12.8px">Colonnes</div>
<div class="hc" style="left:408px;width:32px;top:392px;height:18px;line-height:17px;padding:0;text-align:center;letter-spacing:0.1px">Clé</div>
<div class="hc" style="left:441px;width:170px;top:392px;height:18px;line-height:17px;padding:0;text-align:center;letter-spacing:0.1px">Nom</div>
<div class="hc" style="left:612px;width:107px;top:392px;height:18px;line-height:17px;padding:0;text-align:center;letter-spacing:0.1px">Type de données</div>
<div class="hc" style="left:720px;width:74px;top:392px;height:18px;line-height:17px;padding:0;text-align:center;letter-spacing:0.1px">Longueur</div>
<div class="hc" style="left:795px;width:65px;top:392px;height:18px;line-height:17px;padding:0;text-align:center;letter-spacing:0.1px">Valeur ...</div>
<div class="a" style="left:407px;top:410px;width:453px;height:19px;border:1px solid #808080;background:#fff"></div>
<div class="a" style="left:440px;top:410px;width:1px;height:19px;background:#808080"></div>
<div class="a" style="left:611px;top:410px;width:1px;height:19px;background:#808080"></div>
<div class="a" style="left:719px;top:410px;width:1px;height:19px;background:#808080"></div>
<div class="a" style="left:794px;top:410px;width:1px;height:19px;background:#808080"></div>
<div class="t " style="left:442px;top:413px;letter-spacing:-0.5px">NO_VER</div>
<div class="t " style="left:613px;top:413px;letter-spacing:-0.5px">DECIMAL</div>
<div class="t " style="left:721px;top:413px;">3</div>
<div class="t " style="left:796px;top:413px;">Non</div>
<div class="a" style="left:3px;top:526px;width:866px;height:1.8px;background:#8e8c7e"></div>
<div class="a" style="left:3px;top:547px;width:866px;height:1px;background:#f4f3ec"></div>
<!-- dialog -->
<div class="a" style="left:0px;top:575px;width:332px;height:225px;background:#0b3bd6;border-radius:5px 5px 0 0"></div>
<div class="a" style="left:0px;top:575px;width:332px;height:28px;border-radius:5px 5px 0 0;background:linear-gradient(#3a94ff 0,#1168f0 2px,#0357e4 6px,#0052e0 13px,#045ef0 18px,#0468fa 23px,#0660f0 25px,#0a44c4 26.5px,#0a3cb8 28px)"></div>
<div class="a" style="left:0px;top:601px;width:3px;height:199px;background:linear-gradient(90deg,#0a2bc8,#1c56e6 60%,#0d41d8)"></div>
<div class="a" style="left:328px;top:601px;width:4px;height:199px;background:linear-gradient(90deg,#2a5ce2,#0838d2 45%,#0030c8 70%,#00138c)"></div>
<div class="a" style="left:0px;top:796px;width:332px;height:4px;background:linear-gradient(#2a5ce2,#0838d2 45%,#0030c8 70%,#00138c)"></div>
<div class="a beige" style="left:3px;top:603px;width:325px;height:193px;"></div>
<div class="a" style="left:3px;top:795px;width:325px;height:1px;background:#f8f8f4"></div>
<div class="a" style="left:327px;top:603px;width:1px;height:193px;background:#f8f8f4"></div>
<div class="a" style="left:332px;top:783px;width:1px;height:17px;background:#080818"></div>
<svg style="left:5px;top:581.6px" width="17" height="15.4" viewBox="0 0 18 16"><path d="M5 7V12.5H9" stroke="#1a2a80" stroke-width="1.3" fill="none"/><path d="M.8 6.5V2.2L2.5 .8H6L7.8 2.2V6.5Z" fill="#fbeea0" stroke="#fffbe0" stroke-width=".8"/><path d="M8.8 14.8V10.5L10.5 9.1H14L15.8 10.5V14.8Z" fill="#fbeea0" stroke="#fffbe0" stroke-width=".8"/></svg>
<div class="t " style="left:23.5px;top:583px;font:bold 13.4px 'Liberation Sans',sans-serif;color:#fff;line-height:16px;height:16px;text-shadow:1px 1px 1px #0a2a90;transform:scaleX(.925);transform-origin:0 0"><span style="letter-spacing:0.12px">Ouverture de la table - </span><span style="letter-spacing:-0.98px">VERSION</span></div>
<div class="a" style="left:306px;top:580px;width:20px;height:20px;background:radial-gradient(circle at 30% 25%,#f0a080,#dc5030 55%,#c03a18);border:1px solid #fff;border-radius:3px"></div>
<svg style="left:306px;top:580px" width="20" height="20"><path d="M5.5 5.5L14.5 14.5M14.5 5.5L5.5 14.5" stroke="#fff" stroke-width="2" stroke-linecap="round"/></svg>
<div class="t d" style="left:7px;top:609px;"><span style="letter-spacing:-0.16px">PS608 - DB2 - BDCLI - </span><span style="letter-spacing:-0.41px">BDCLI.VERSION</span></div>
<div class="a" style="left:4px;top:631px;width:192px;height:81px;border:1px solid;border-color:#807e70 #fff #fff #807e70;box-shadow:inset 1px 1px 0 #5e5c50, inset -1px -1px 0 #fff"></div>
<div class="hc d" style="left:5px;top:633px;width:96px;height:18px;line-height:16px;padding-left:3px;letter-spacing:-0.45px">NO_VER</div>
<svg style="left:87px;top:638px" width="7.2" height="9"><use href="#srt" width="7.2" height="9"/></svg>
<div class="a" style="left:5px;top:651px;width:96px;height:15px;background:#fff;border-right:1px solid #8a8878;border-bottom:1px solid #8a8878"></div>
<div class="t d" style="left:88px;top:652px;width:11px;text-align:right;line-height:13px">2</div>
<div class="a" style="left:5px;top:666px;width:96px;height:16px;background:#fff"></div>
<div class="btn" style="left:200px;top:631px;width:128px;height:21px;line-height:20px;">Ajout de l<u>i</u>gne</div>
<div class="btn" style="left:200px;top:658px;width:128px;height:21px;line-height:20px;"><u>S</u>uppression de ligne</div>
<div class="btn" style="left:4px;top:717px;width:76px;height:21px;line-height:20px;">Va<u>l</u>idation</div>
<div class="btn" style="left:84px;top:717px;width:81px;height:21px;line-height:20px;">A<u>n</u>nulation</div>
<div class="a" style="left:7px;top:748px;width:12px;height:12px;background:#fff;border:1px solid;border-color:#807e70 #fff #fff #807e70;box-shadow:inset 1px 1px 0 #5e5c50"></div>
<div class="t d" style="left:23px;top:747px;letter-spacing:0.03px">Validation auto<u>m</u>atique des modificatio</div>
<div class="btn" style="left:162px;top:771px;width:78px;height:20px;line-height:19px;outline:1px solid #333;outline-offset:0;">Fermeture</div>
<div class="btn" style="left:245px;top:770px;width:79px;height:21px;line-height:20px;">Aide</div>
</body></html>
